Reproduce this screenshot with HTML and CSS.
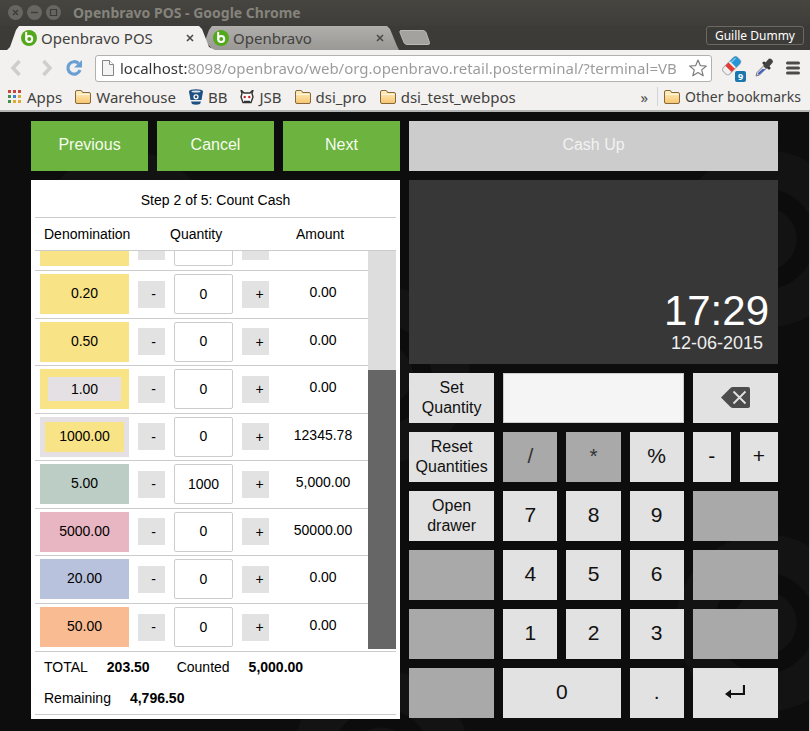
FILE: index.html
```html
<!DOCTYPE html>
<html lang="en">

<head>
    <meta charset="UTF-8">
    <meta name="viewport" content="width=device-width, initial-scale=1.0">
    <title>Openbravo POS</title>
    <link rel="stylesheet" href="styles.css">
</head>

<body>
    <svg class="defs" width="0" height="0" aria-hidden="true">
        <defs>
            <linearGradient id="folderFill" x1="0" y1="0" x2="0" y2="1">
                <stop offset="0" stop-color="#fff0c4" />
                <stop offset="1" stop-color="#f7c56e" />
            </linearGradient>
            <symbol id="folder" viewBox="0 0 16 14">
                <path d="M.5 12V2Q.5.5 2 .5h4Q7 .5 7.5 2.500H14q1.500 0 1.500 1.500v8q0 1.500-1.500 1.500H2Q.5 13.500.5 12z" fill="url(#folderFill)" stroke="#86683d" />
                <path d="M1.500 4.500h13" stroke="#fff6dc" />
            </symbol>
            <symbol id="logo" viewBox="0 0 16 16">
                <circle cx="8" cy="8" r="8" fill="#54a81b" />
                <path d="M5.200 2.800V9.200" stroke="#fff" stroke-width="2" fill="none" stroke-linecap="round" />
                <circle cx="8.200" cy="9" r="3" stroke="#fff" stroke-width="2" fill="none" />
            </symbol>
            <symbol id="cross" viewBox="0 0 8 8">
                <path d="M1 1l6 6M7 1L1 7" stroke="#4a4a48" stroke-width="1.600" />
            </symbol>
        </defs>
    </svg>

    <header class="browser">
        <div class="titlebar">
            <button class="win-btn" aria-label="Close"><svg width="15" height="15"><circle cx="7.500" cy="7.500" r="7.500" fill="#686660" /><path d="M5 5l5 5M10 5l-5 5" stroke="#3c3b37" stroke-width="1.300" /></svg></button>
            <button class="win-btn" aria-label="Minimize"><svg width="15" height="15"><circle cx="7.500" cy="7.500" r="7.500" fill="#686660" /><path d="M4 7.500h7" stroke="#3c3b37" stroke-width="1.300" /></svg></button>
            <button class="win-btn" aria-label="Maximize"><svg width="15" height="15"><circle cx="7.500" cy="7.500" r="7.500" fill="#686660" /><path d="M4.500 4.500h6v6h-6z" stroke="#3c3b37" fill="none" stroke-width="1.200" /></svg></button>
            <span class="win-title">Openbravo POS - Google Chrome</span>
        </div>
        <div class="tabs">
            <div class="tab active">
                <svg width="16" height="16"><use href="#logo" /></svg>
                <span>Openbravo POS</span>
                <button class="tab-close" aria-label="Close tab"><svg width="8" height="8"><use href="#cross" /></svg></button>
            </div>
            <div class="tab">
                <svg width="16" height="16"><use href="#logo" /></svg>
                <span>Openbravo</span>
                <button class="tab-close" aria-label="Close tab"><svg width="8" height="8"><use href="#cross" /></svg></button>
            </div>
            <button class="new-tab" aria-label="New tab"><svg width="32" height="15"><path d="M2 .5h22q2 0 3 2l3.500 10q.5 2-1.500 2H8q-2 0-3-2L1 2.500Q.5.5 2 .5z" fill="#a3a29f" stroke="#bab9b6" /></svg></button>
            <button class="user">Guille Dummy</button>
        </div>

        <div class="toolbar">
            <button class="nav" aria-label="Back"><svg width="12" height="18"><path d="M9.500 2L3 9l6.500 7" fill="none" stroke="#d0cecb" stroke-width="3.500" /></svg></button>
            <button class="nav" aria-label="Forward"><svg width="12" height="18"><path d="M2.500 2L9 9l-6.500 7" fill="none" stroke="#d0cecb" stroke-width="3.500" /></svg></button>
            <button class="nav" aria-label="Reload"><svg width="18" height="18"><path d="M13.500 4.500A6.200 6.200 0 1 0 15 11" fill="none" stroke="#6a9fd4" stroke-width="3.200" /><path d="M17 1v7.500H9z" fill="#6a9fd4" /></svg></button>
            <div class="omnibox">
                <svg width="12" height="16"><path d="M.5.5h7l4 4v11H.5z" fill="#f4f4f4" stroke="#858585" /><path d="M7.500.5v4h4" fill="#fff" stroke="#858585" /></svg>
                <input type="text" aria-label="Address" value="localhost:8098/openbravo/web/org.openbravo.retail.posterminal/?terminal=VB">
                <svg width="18" height="18"><path d="M9 1l2.300 5.600 6 .4-4.600 3.900 1.500 5.900L9 13.600l-5.200 3.200 1.500-5.900L.7 7l6-.4z" fill="#fff" stroke="#7c7c7c" stroke-width="1.200" stroke-linejoin="round" /></svg>
            </div>
            <button class="tool" aria-label="Eraser">
                <svg width="24" height="24"><g transform="rotate(-45 10 10)"><rect x="0" y="5" width="20" height="9" rx="3" fill="#f0eeee" stroke="#b0b0b0" /><path d="M5.500 5H10v9H5.500z" fill="#e13b33" /><path d="M12 5h5q3 0 3 3v3q0 3-3 3h-5z" fill="#2795d6" /><path d="M12 7h6" stroke="#9fd3f2" /></g></svg>
                <span class="badge">9</span>
            </button>
            <button class="tool" aria-label="Color picker">
                <svg width="20" height="20"><path d="M2 18l1-3.500L11 6.500l2.500 2.500-8 8z" fill="#e7eaf4" stroke="#777" /><path d="M3.500 16.500l1-2 4-3.500h3l-6 5.500z" fill="#3f5fc4" /><path d="M10 5l5 5" stroke="#333" stroke-width="3" stroke-linecap="round" /><path d="M12.500 7.500l3.500-4" stroke="#444" stroke-width="5.500" stroke-linecap="round" /></svg>
            </button>
            <button class="tool" aria-label="Menu"><svg width="14" height="14"><path d="M1.500 2h11M1.500 7h11M1.500 12h11" stroke="#4b4b4b" stroke-width="3" stroke-linecap="round" /></svg></button>
        </div>

        <nav class="bookmarks">
            <a href="#">
                <svg width="14" height="14"><path d="M0 0h3v3H0zM5 0h3v3H5zM10 0h3v3h-3z" fill="#c9463c" /><path d="M0 5h3v3H0zM0 10h3v3H0z" fill="#3f9150" /><path d="M5 5h3v3H5z" fill="#3f7fd0" /><path d="M10 5h3v3h-3zM5 10h3v3H5zM10 10h3v3h-3z" fill="#dfaa32" /></svg>
                Apps
            </a>
            <a href="#"><svg width="16" height="14"><use href="#folder" /></svg>Warehouse</a>
            <a href="#">
                <svg width="14" height="16"><path d="M0 2.500L1.500 11h11L14 2.500z" fill="#205081" /><path d="M2 12.500h10L11 15q-4 1.500-8 0z" fill="#205081" /><ellipse cx="7" cy="2.500" rx="7" ry="2.300" fill="#205081" /><ellipse cx="7" cy="2.500" rx="4.500" ry="1" fill="#dce6ef" /><circle cx="7" cy="7.800" r="2" fill="none" stroke="#fff" stroke-width="1.300" /></svg>
                BB
            </a>
            <a href="#">
                <svg width="14" height="14"><path d="M1 0l1 3.500L1 7l2 5.500h8L13 7l-1-3.500L13 0l-3 3H4z" fill="#fff" stroke="#333" stroke-width="1.400" /><circle cx="4.700" cy="7" r="1.200" fill="#c22" /><circle cx="9.300" cy="7" r="1.200" fill="#c22" /><path d="M4 11.500h6" stroke="#333" stroke-width="1.500" /></svg>
                JSB
            </a>
            <a href="#"><svg width="16" height="14"><use href="#folder" /></svg>dsi_pro</a>
            <a href="#"><svg width="16" height="14"><use href="#folder" /></svg>dsi_test_webpos</a>
            <button class="more" aria-label="More bookmarks">»</button>
            <a class="other" href="#"><svg width="16" height="14"><use href="#folder" /></svg>Other bookmarks</a>
        </nav>
    </header>

    <main class="pos">
        <section class="left">
            <div class="steps">
                <button>Previous</button>
                <button>Cancel</button>
                <button>Next</button>
            </div>

            <div class="panel">
                <h1>Step 2 of 5: Count Cash</h1>
                <div class="count">
                    <table>
                        <thead>
                            <tr><th>Denomination</th><th>Quantity</th><th>Amount</th></tr>
                        </thead>
                        <tbody>
                            <tr class="cut">
                                <td><button class="coin" aria-label="Coin"></button></td>
                                <td><button class="step" aria-label="Less"></button></td>
                                <td><input type="text" aria-label="Quantity"></td>
                                <td><button class="step" aria-label="More"></button></td>
                                <td></td>
                            </tr>
                            <tr>
                                <td><button class="coin">0.20</button></td>
                                <td><button class="step">-</button></td>
                                <td><input type="text" aria-label="Quantity of 0.20" value="0"></td>
                                <td><button class="step plus">+</button></td>
                                <td class="amount">0.00</td>
                            </tr>
                            <tr>
                                <td><button class="coin">0.50</button></td>
                                <td><button class="step">-</button></td>
                                <td><input type="text" aria-label="Quantity of 0.50" value="0"></td>
                                <td><button class="step plus">+</button></td>
                                <td class="amount">0.00</td>
                            </tr>
                            <tr>
                                <td><button class="coin one">1.00</button></td>
                                <td><button class="step">-</button></td>
                                <td><input type="text" aria-label="Quantity of 1.00" value="0"></td>
                                <td><button class="step plus">+</button></td>
                                <td class="amount">0.00</td>
                            </tr>
                            <tr>
                                <td><button class="coin thousand">1000.00</button></td>
                                <td><button class="step">-</button></td>
                                <td><input type="text" aria-label="Quantity of 1000.00" value="0"></td>
                                <td><button class="step plus">+</button></td>
                                <td class="amount">12345.78</td>
                            </tr>
                            <tr>
                                <td><button class="coin green">5.00</button></td>
                                <td><button class="step">-</button></td>
                                <td><input type="text" aria-label="Quantity of 5.00" value="1000"></td>
                                <td><button class="step plus">+</button></td>
                                <td class="amount">5,000.00</td>
                            </tr>
                            <tr>
                                <td><button class="coin pink">5000.00</button></td>
                                <td><button class="step">-</button></td>
                                <td><input type="text" aria-label="Quantity of 5000.00" value="0"></td>
                                <td><button class="step plus">+</button></td>
                                <td class="amount">50000.00</td>
                            </tr>
                            <tr>
                                <td><button class="coin blue">20.00</button></td>
                                <td><button class="step">-</button></td>
                                <td><input type="text" aria-label="Quantity of 20.00" value="0"></td>
                                <td><button class="step plus">+</button></td>
                                <td class="amount">0.00</td>
                            </tr>
                            <tr>
                                <td><button class="coin orange">50.00</button></td>
                                <td><button class="step">-</button></td>
                                <td><input type="text" aria-label="Quantity of 50.00" value="0"></td>
                                <td><button class="step plus">+</button></td>
                                <td class="amount">0.00</td>
                            </tr>
                        </tbody>
                    </table>
                    <div class="scroll"><div class="thumb"></div></div>
                </div>
                <div class="totals">
                    <p><span>TOTAL</span><b>203.50</b><span>Counted</span><b>5,000.00</b></p>
                    <p><span>Remaining</span><b>4,796.50</b></p>
                </div>
            </div>
        </section>

        <section class="right">
            <button class="cashup" disabled>Cash Up</button>
            <div class="clock">
                <div class="time">17:29</div>
                <div class="date">12-06-2015</div>
            </div>
            <div class="keypad">
                <button class="label">Set Quantity</button>
                <input class="wide3" type="text" aria-label="Entry">
                <button class="wide2" aria-label="Backspace"><svg width="29" height="21"><path d="M0 10.500L9.500 1Q10.500 0 12 0h15q2 0 2 2v17q0 2-2 2H12q-1.500 0-2.500-1z" fill="#4c4c4c" /><path d="M12.500 4.500l12 12M24.500 4.500l-12 12" stroke="#e2e2e2" stroke-width="1.800" /></svg></button>

                <button class="label">Reset Quantities</button>
                <button disabled>/</button>
                <button disabled>*</button>
                <button>%</button>
                <button>-</button>
                <button>+</button>

                <button class="label">Open drawer</button>
                <button>7</button>
                <button>8</button>
                <button>9</button>
                <button class="wide2" disabled aria-label="Empty"></button>

                <button disabled aria-label="Empty"></button>
                <button>4</button>
                <button>5</button>
                <button>6</button>
                <button class="wide2" disabled aria-label="Empty"></button>

                <button disabled aria-label="Empty"></button>
                <button>1</button>
                <button>2</button>
                <button>3</button>
                <button class="wide2" disabled aria-label="Empty"></button>

                <button disabled aria-label="Empty"></button>
                <button class="wide2">0</button>
                <button>.</button>
                <button class="wide2" aria-label="Enter"><svg width="20" height="14"><path d="M19 0v9H4" fill="none" stroke="#111" stroke-width="2.200" /><path d="M0 9l6-4.500v9z" fill="#111" /></svg></button>
            </div>
        </section>
    </main>
</body>

</html>
```
FILE: styles.css
```css
* {
    box-sizing: border-box;
}

body {
    margin: 0;
    min-height: 100vh;
    display: flex;
    flex-direction: column;
    font-family: "Liberation Sans", Arial, sans-serif;
    font-size: 14px;
    background: #0c0c0c;
}

button,
input {
    font: inherit;
    color: inherit;
    border: 0;
    border-radius: 0;
    padding: 0;
    margin: 0;
    min-width: 0;
    background: none;
}

svg {
    display: block;
    flex: none;
}

.defs {
    position: absolute;
}

/* browser window */
.browser {
    font-family: "Noto Sans", "Open Sans", sans-serif;
    font-size: 15px;
    color: #4b4a48;
    background: #f2f1f0;
    border-bottom: 2px solid #b4b6b6;
}

.titlebar {
    display: flex;
    align-items: center;
    gap: 4px;
    height: 26px;
    padding: 0 8px 2px;
    background: linear-gradient(#464540, #3e3d39);
}

.win-title {
    margin-left: 8px;
    font-size: 14px;
    font-weight: bold;
    color: #85837c;
}

.tabs {
    display: flex;
    height: 24px;
    padding: 0 6px 0 7px;
    background: #3c3b37;
}

.tab {
    display: flex;
    align-items: center;
    gap: 4px;
    width: 194px;
    margin-left: -10px;
    padding: 0 15px 0 8px;
    color: #42413e;
    background: linear-gradient(#b0afac, #999895);
    clip-path: polygon(8px 100%, 0 15px, 4px 4px, 7px 0, 182px 0, 185px 3px, 192px 20px, 100% 100%);
}

.tab.active {
    z-index: 1;
    width: 208px;
    margin-left: 0;
    padding: 0 21px 0 14px;
    background: #f2f1f0;
    clip-path: polygon(0 100%, 3px 21px, 9px 4px, 12px 0, 192px 0, 195px 3px, 202px 21px, 100% 100%);
}

.tab-close {
    margin-left: auto;
}

.new-tab {
    padding-bottom: 1px;
}

.user {
    align-self: flex-start;
    margin-left: auto;
    height: 19px;
    padding: 0 8px;
    border: 1px solid #6a6964;
    border-radius: 3px;
    font-size: 12px;
    line-height: 17px;
    color: #fff;
}

.toolbar {
    display: flex;
    align-items: center;
    height: 36px;
    padding: 0 10px;
}

.nav {
    flex: none;
    margin-right: 19px;
}

.nav + .nav {
    margin-right: 12px;
}

.omnibox {
    display: flex;
    align-items: center;
    flex: 1;
    min-width: 0;
    gap: 6px;
    height: 27px;
    padding: 0 4px 0 6px;
    margin-right: 10px;
    background: #fff;
    border: 1px solid #b3b1ae;
    border-radius: 3px;
}

/* host is darker than the rest of the address */
.omnibox input {
    flex: 1;
    height: 25px;
    color: transparent;
    background: linear-gradient(90deg, #333 67px, #999 67px);
    background-clip: text;
    -webkit-background-clip: text;
}

.tool {
    position: relative;
    flex: none;
    margin-right: 8px;
}

.tool:last-child {
    margin: 0 0 0 4px;
}

.badge {
    position: absolute;
    right: 0;
    bottom: -2px;
    width: 11px;
    border-radius: 2px;
    font-size: 9px;
    font-weight: bold;
    line-height: 11px;
    text-align: center;
    color: #fff;
    background: #1b76ad;
}

.bookmarks {
    display: flex;
    align-items: center;
    gap: 13px;
    height: 24px;
    padding: 0 9px 3px 8px;
}

.bookmarks a {
    display: flex;
    align-items: center;
    gap: 5px;
    color: #42413e;
    text-decoration: none;
    white-space: nowrap;
}

.more {
    margin-left: auto;
}

.bookmarks .other {
    border-left: 1px solid #cfd3da;
    padding-left: 6px;
    margin-left: -4px;
    font-size: 14px;
}

/* point of sale */
.pos {
    flex: 1;
    display: grid;
    grid-template-columns: 1fr 1fr;
    align-items: start;
    gap: 9px;
    padding: 9px 31px 12px;
    border-right: 1px solid #c4c8cc;
    background:
        radial-gradient(circle at 125px 127px, #131313 31px, #0c0c0c 32px, #0c0c0c 50px, #131313 51px, #131313 88px, transparent 89px),
        radial-gradient(circle at 381px 263px, #131313 31px, #0c0c0c 32px, #0c0c0c 50px, #131313 51px, #131313 88px, transparent 89px),
        #0d0d0d;
    background-size: 640px 384px;
}

.left,
.right {
    display: flex;
    flex-direction: column;
    gap: 9px;
}

.left {
    align-self: stretch;
}

.steps {
    display: grid;
    grid-template-columns: repeat(3, 1fr);
    gap: 9px;
}

.steps button,
.cashup {
    height: 50px;
    padding-bottom: 2px;
    font-size: 16px;
    color: #f5fbf0;
    background: #6cb33f;
}

.cashup {
    color: #f2f2f2;
    background: #ccc;
}

.panel {
    flex: 1;
    display: flex;
    flex-direction: column;
    padding: 0 4px 4px;
    background: #fff;
}

h1 {
    margin: 0;
    border-bottom: 1px solid #ccc;
    font-size: 14px;
    font-weight: normal;
    line-height: 37px;
    padding-top: 2px;
    height: 38px;
    text-align: center;
}

.count {
    flex: 1;
    display: grid;
    grid-template-columns: 1fr 28px;
    grid-template-rows: 33px 1fr;
    border-bottom: 1px solid #ccc;
}

table {
    display: contents;
}

thead {
    grid-column: 1 / 3;
    border-bottom: 1px solid #ccc;
    display: block;
}

thead tr {
    display: grid;
    grid-template-columns: 126px 126px 1fr;
    padding-left: 9px;
}

th {
    padding: 0;
    font-weight: normal;
    line-height: 32px;
    text-align: left;
}

tbody {
    display: grid;
    grid-template-rows: 20px repeat(8, 1fr);
}

tbody tr {
    display: grid;
    grid-template-columns: 89px 27px 59px 27px 1fr;
    gap: 9px;
    align-items: center;
    padding-left: 5px;
    overflow: hidden;
    border-bottom: 1px solid #ccc;
}

tbody tr:last-child {
    border-bottom: 0;
}

/* row scrolled partly out of view */
tbody .cut {
    align-content: end;
    padding-bottom: 4px;
}

td {
    padding: 0;
}

td button,
td input {
    display: block;
    width: 100%;
}

.coin {
    height: 40px;
    padding-bottom: 2px;
    background: #f8e487;
}

.one {
    padding: 0;
    border: 8px solid #f8e487;
    background: #e5e0e3;
}

.thousand {
    border: 5px solid #e5e0e3;
}

.green {
    background: #bbcdc5;
}

.pink {
    background: #e8b6c3;
}

.blue {
    background: #b8c2dd;
}

.orange {
    background: #f8bb92;
}

.step {
    height: 27px;
    padding-left: 4px;
    background: #e2e2e2;
}

.plus {
    padding-left: 8px;
}

td input {
    height: 40px;
    padding-bottom: 1px;
    text-align: center;
    border: 1px solid #ccc;
    border-radius: 2px;
}

.amount {
    padding-bottom: 4px;
    text-align: center;
}

.scroll {
    display: flex;
    flex-direction: column;
    justify-content: flex-end;
    padding-bottom: 2px;
    background: linear-gradient(#ddd, #ddd) content-box;
}

.thumb {
    height: 70%;
    background: #666;
}

.totals {
    padding-left: 9px;
    border-bottom: 1px solid #ccc;
}

.totals p {
    margin: 0;
    line-height: 31px;
}

.totals span {
    margin-right: 19px;
}

.totals b {
    margin-right: 27px;
}

.clock {
    display: flex;
    flex-direction: column;
    justify-content: flex-end;
    height: 184px;
    padding: 0 9px 11px;
    text-align: right;
    color: #fff;
    background: #373737;
}

.time {
    font-size: 42px;
    line-height: 44px;
}

.date {
    padding-right: 6px;
    font-size: 18px;
    line-height: 20px;
    color: #eee;
}

.keypad {
    display: grid;
    grid-template-columns: 85fr 54fr 54fr 54fr 38fr 38fr;
    grid-auto-rows: 50px;
    gap: 9px;
}

.keypad button {
    padding-bottom: 2px;
    font-size: 21px;
    color: #111;
    background: #e2e2e2;
}

.keypad button:disabled {
    color: #333;
    background: #a9a9a9;
}

.keypad .label {
    padding: 0 4px;
    font-size: 16px;
    line-height: 20px;
}

.keypad svg {
    margin: 0 auto;
}

.keypad input {
    width: 100%;
    padding: 0 8px;
    font-size: 21px;
    border: 1px solid #ccc;
    background: #f5f5f5;
}

.keypad .wide2 {
    grid-column: span 2;
}

.keypad .wide3 {
    grid-column: span 3;
}
```
